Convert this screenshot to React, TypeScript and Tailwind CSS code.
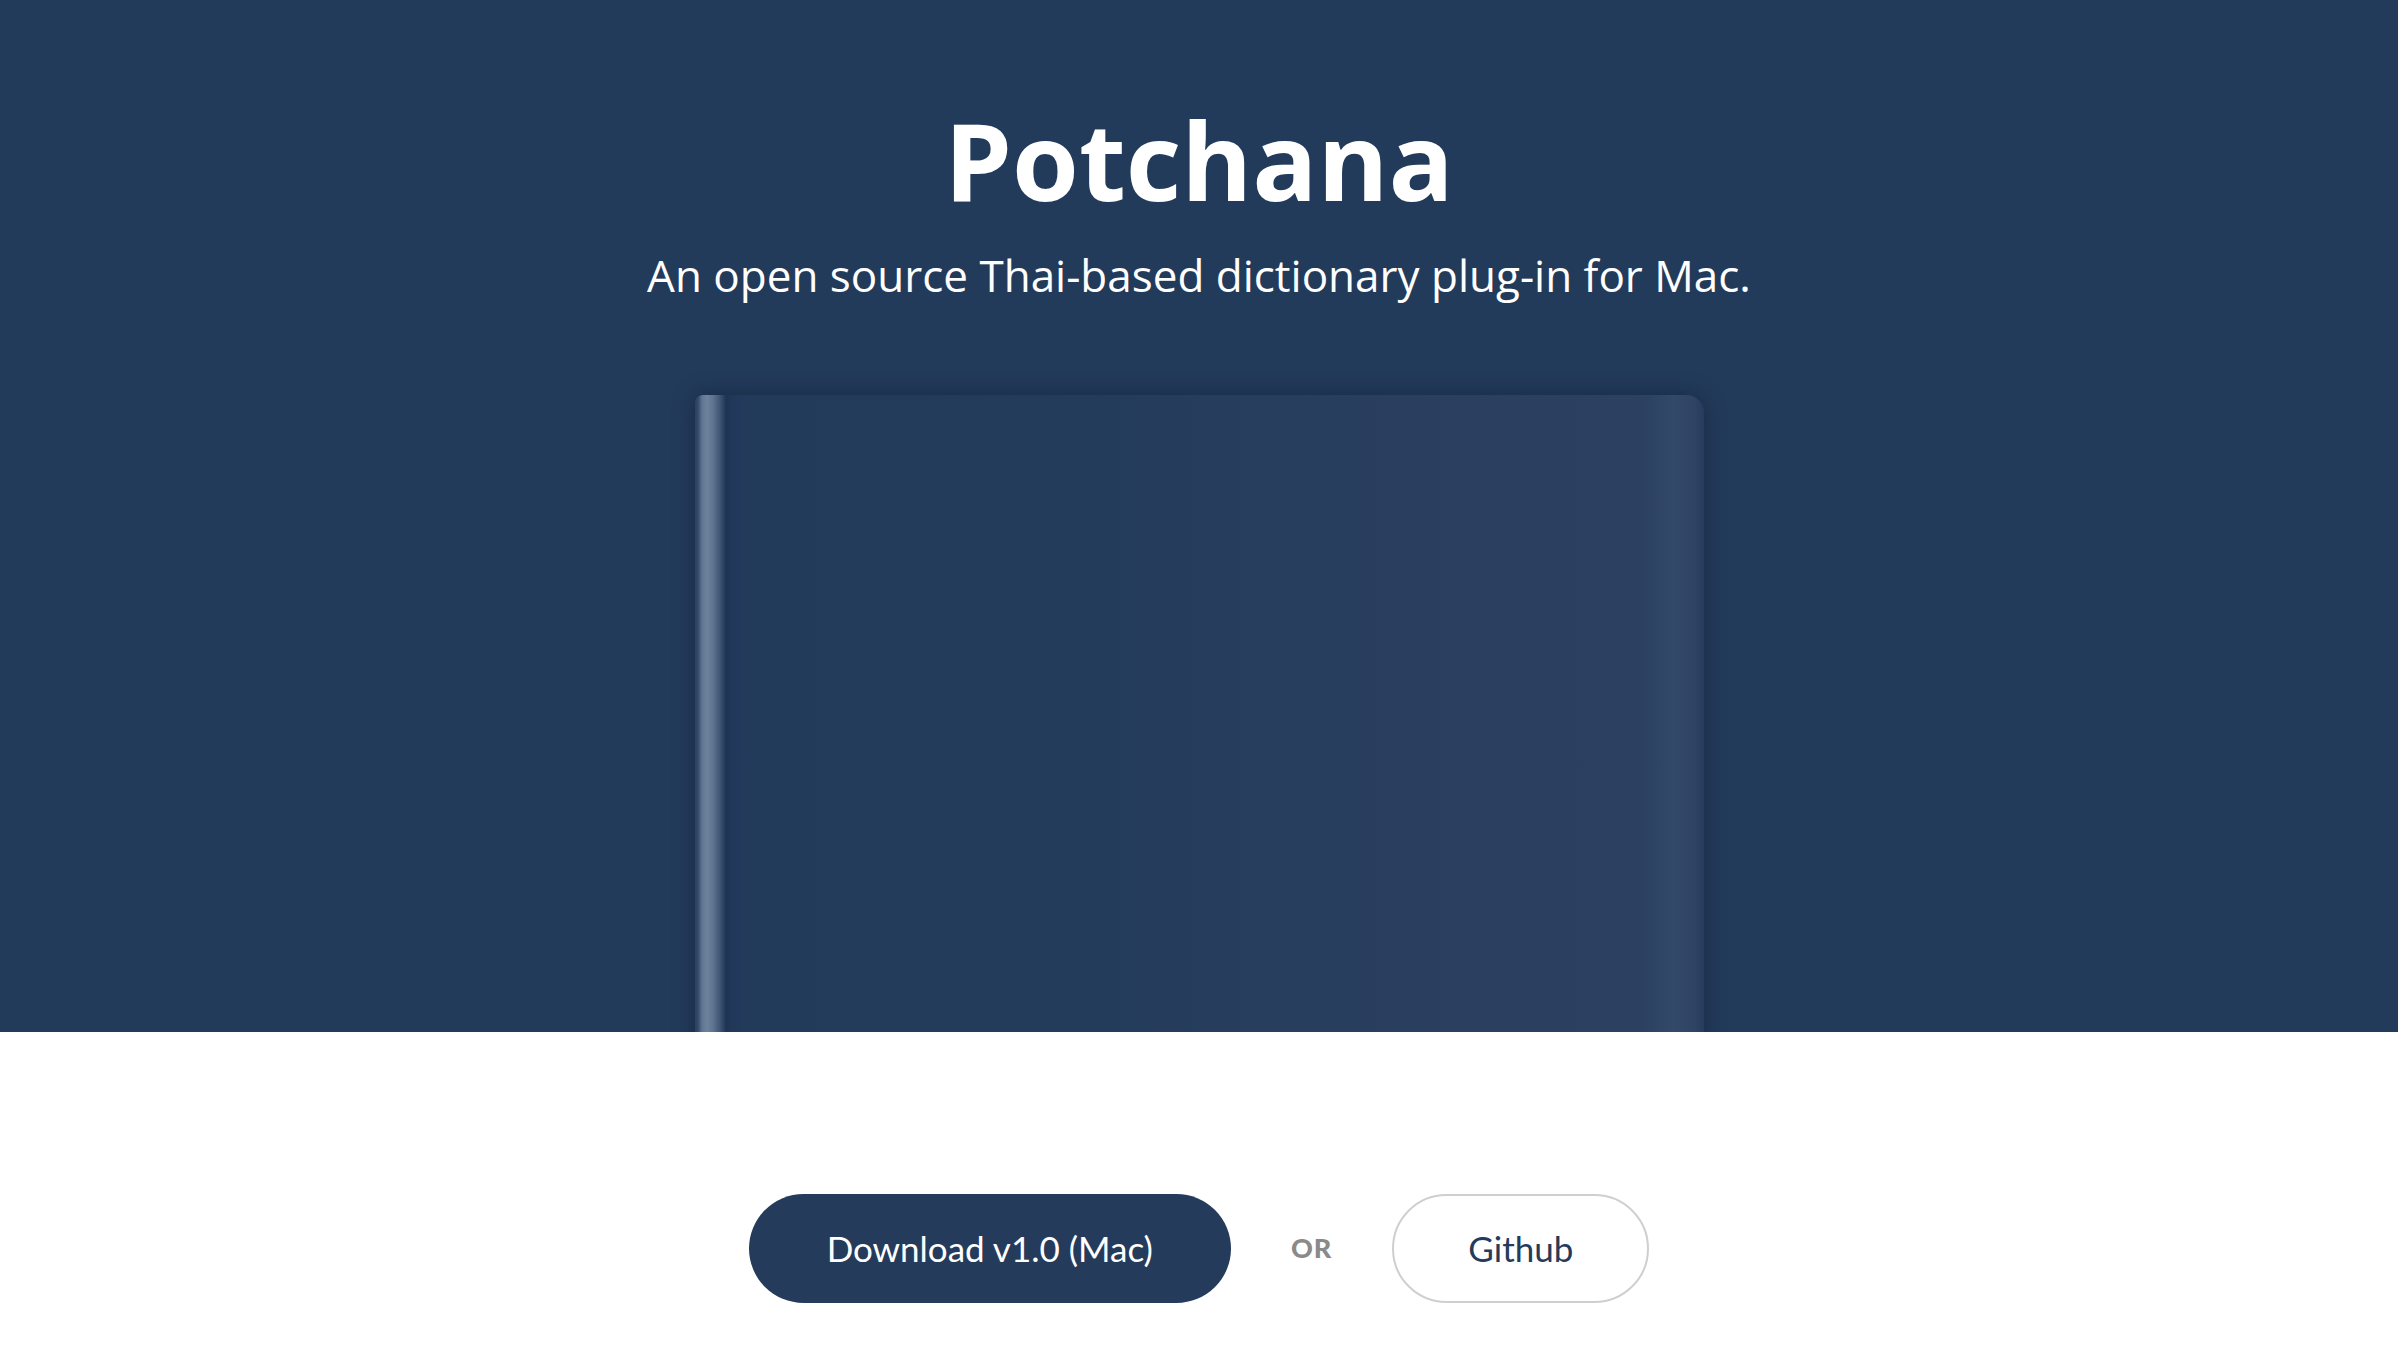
export default function App() {
  return (
    <div className="min-h-screen w-full bg-white">
      {/* Hero: title, tagline and the book cover peeking from the bottom */}
      <section className="flex h-[1032px] w-full flex-col items-center overflow-hidden bg-[#233b5b] pt-[97px]">
        <h1 className="font-['Open_Sans',sans-serif] text-[108px] font-bold leading-[125px] text-white">
          Potchana
        </h1>
        <p className="mt-[23px] font-['Open_Sans',sans-serif] text-[44px] leading-[60px] text-white">
          An open source Thai-based dictionary plug-in for Mac.
        </p>
        <div className="mt-[90px] h-[720px] w-[1009px] shrink-0 rounded-tl-[8px] rounded-tr-[18px] bg-[linear-gradient(90deg,#2a4161_0px,#34496a_3px,#5f7591_7px,#6d829b_12px,#5e7490_18px,#3a5070_26px,#1d3453_31px,#21385a_38px,#233b5b_60px,#243c5c_40%,#2a3f5f_72%,#2c4161_94%,#33496a_97%,#2f4465_99%,#283d5d_100%)] shadow-[0_0_22px_rgba(10,20,40,0.45)]" />
      </section>

      {/* Call to action */}
      <div className="flex items-center justify-center pt-[162px] pb-[60px] font-['Lato',sans-serif]">
        <a
          href="#"
          className="flex h-[109px] items-center rounded-full bg-[#243b5b] px-[78px] text-[35px] text-white"
        >
          Download v1.0 (Mac)
        </a>
        <span className="mx-[60px] text-[27px] font-black tracking-[1px] text-[#8a8a8a]">OR</span>
        <a
          href="#"
          className="flex h-[109px] items-center rounded-full border-2 border-[#cfcfcf] bg-white px-[74px] text-[35px] text-[#243b5b]"
        >
          Github
        </a>
      </div>
    </div>
  )
}
